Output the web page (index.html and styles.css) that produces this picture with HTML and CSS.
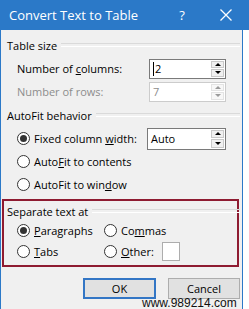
FILE: index.html
```html
<!DOCTYPE html>
<html lang="en">
<head>
    <meta charset="UTF-8">
    <title>Convert Text to Table</title>
    <link rel="stylesheet" href="styles.css">
</head>
<body>
    <div class="window">
        <div class="titlebar">
            <span class="title">Convert Text to Table</span>
            <span class="help">?</span>
            <svg class="close" width="12" height="12" viewBox="0 0 12 12">
                <path d="M0.5 0.5 L11.5 11.5 M11.5 0.5 L0.5 11.5" stroke="#fff" stroke-width="1.3" fill="none"/>
            </svg>
        </div>

        <div class="body">
            <div class="group-head"><span>Table size</span></div>
            <div class="row">
                <label>Number of <u>c</u>olumns:</label>
                <div class="spin">
                    <span class="value"><i class="caret"></i>2</span>
                    <span class="arrows"><b class="up"></b><b class="down"></b></span>
                </div>
            </div>
            <div class="row disabled">
                <label>Number of rows:</label>
                <div class="spin">
                    <span class="value">7</span>
                    <span class="arrows"><b class="up"></b><b class="down"></b></span>
                </div>
            </div>

            <div class="group-head second"><span>AutoFit behavior</span></div>
            <div class="row">
                <span class="radio on"></span>
                <label>Fixed column <u>w</u>idth:</label>
                <div class="spin wide">
                    <span class="value">Auto</span>
                    <span class="arrows"><b class="up"></b><b class="down"></b></span>
                </div>
            </div>
            <div class="row">
                <span class="radio"></span>
                <label>Auto<u>F</u>it to contents</label>
            </div>
            <div class="row">
                <span class="radio"></span>
                <label>AutoFit to win<u>d</u>ow</label>
            </div>

            <div class="sep">
                <div class="group-head"><span>Separate text at</span></div>
                <div class="options">
                    <div class="opt"><span class="radio on"></span><u>P</u>aragraphs</div>
                    <div class="opt"><span class="radio"></span>Co<u>m</u>mas</div>
                    <div class="opt"><span class="radio"></span><u>T</u>abs</div>
                    <div class="opt"><span class="radio"></span><u>O</u>ther:<span class="other-box"></span></div>
                </div>
            </div>

            <div class="buttons">
                <button class="btn default">OK</button>
                <button class="btn">Cancel</button>
            </div>
        </div>

        <div class="watermark">www.989214.com</div>
    </div>
</body>
</html>
```

FILE: styles.css
```css
* {
    box-sizing: border-box;
}
body {
    margin: 0;
    background: #fff;
    font-family: "Open Sans", "Noto Sans", sans-serif;
    font-size: 11px;
    color: #000;
}
.window {
    position: relative;
    width: 249px;
    height: 309px;
    overflow: hidden;
}
.titlebar {
    height: 30px;
    background: #2b79c8;
    color: #fff;
    display: flex;
    align-items: center;
    padding-left: 9px;
}
.title {
    flex: 1;
    font-size: 13px;
}
.help {
    width: 14px;
    text-align: center;
    font-size: 13px;
    margin-right: 31px;
}
.close {
    margin-right: 17px;
}
.body {
    width: 243px;
    height: 279px;
    background: #f0f0f0;
    border-left: 1px solid #2b79c8;
    border-right: 1px solid #2b79c8;
    padding: 7px 6px 0 6px;
}
.group-head {
    display: flex;
    align-items: center;
    height: 16px;
    margin: 0 -4px 4px 0;
}
.group-head::after {
    content: "";
    flex: 1;
    height: 2px;
    border-top: 1px solid #dadada;
    border-bottom: 1px solid #fff;
    margin-left: 4px;
}
.group-head.second {
    margin-top: 4px;
}
.row {
    display: flex;
    align-items: center;
    height: 23px;
    padding: 0 10px;
}
.row label {
    flex: 1;
}
.row.disabled {
    color: #8d8d8d;
}
.spin {
    width: 77px;
    height: 20px;
    background: #fff;
    border: 1px solid #7a7a7a;
    display: flex;
}
.spin.wide {
    width: 79px;
    height: 22px;
}
.spin .value {
    flex: 1;
    display: flex;
    align-items: center;
    padding-left: 3px;
}
.caret {
    width: 1px;
    height: 14px;
    background: #000;
    margin-right: 1px;
}
.arrows {
    width: 15px;
    display: flex;
    flex-direction: column;
    gap: 1px;
    padding: 1px;
}
.arrows b {
    flex: 1;
    display: flex;
    align-items: center;
    justify-content: center;
    background: #f0f0f0;
    border: 1px solid #c9c9c9;
}
.arrows b::after {
    content: "";
    border-left: 3px solid transparent;
    border-right: 3px solid transparent;
}
.arrows .up::after {
    border-bottom: 3px solid #000;
}
.arrows .down::after {
    border-top: 3px solid #000;
}
.disabled .spin {
    border-color: #cccccc;
}
.disabled .arrows b {
    background: #f7f7f7;
    border-color: #e3e3e3;
}
.disabled .arrows .up::after {
    border-bottom-color: #9a9a9a;
}
.disabled .arrows .down::after {
    border-top-color: #9a9a9a;
}
.radio {
    width: 13px;
    height: 13px;
    border: 1px solid #333;
    border-radius: 50%;
    background: #fff;
    margin-right: 4px;
    display: flex;
    align-items: center;
    justify-content: center;
}
.radio.on::after {
    content: "";
    width: 7px;
    height: 7px;
    border-radius: 50%;
    background: #333;
}
.sep {
    margin: 3px -3px 0 -5px;
    border: 2px solid #8e1b31;
    padding: 2px 1px 3px 3px;
}
.sep .group-head {
    margin-bottom: 1px;
}
.options {
    display: grid;
    grid-template-columns: 87px auto;
    padding-left: 10px;
}
.opt {
    display: flex;
    align-items: center;
    height: 21px;
}
.other-box {
    width: 18px;
    height: 19px;
    background: #fff;
    border: 1px solid #adadad;
    margin-left: 8px;
}
.buttons {
    display: flex;
    justify-content: flex-end;
    gap: 12px;
    margin: 11px -4px 0 0;
}
.btn {
    width: 72px;
    height: 21px;
    background: #e1e1e1;
    border: 1px solid #adadad;
    font: inherit;
    color: #000;
    padding: 0;
}
.btn.default {
    width: 73px;
    border: 2px solid #3376c5;
}
.watermark {
    position: absolute;
    left: 142px;
    top: 297px;
    font-family: "Liberation Sans", Arial, sans-serif;
    font-size: 12px;
    line-height: 12px;
    color: #111;
}
```
